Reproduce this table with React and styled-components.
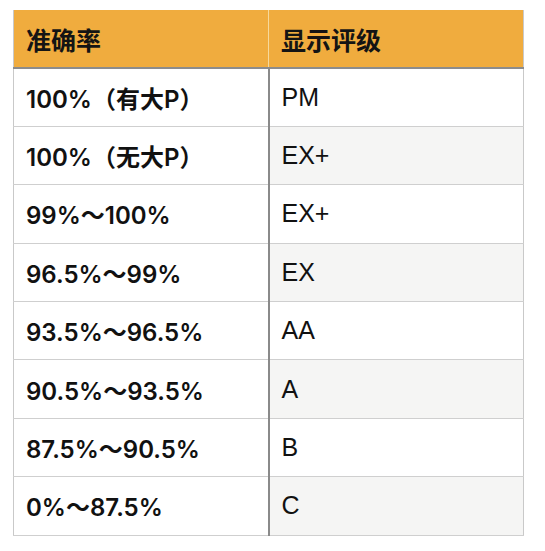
import React from "react";
import styled, { createGlobalStyle } from "styled-components";

const rows = [
  ["100%（有大P）", "PM"],
  ["100%（无大P）", "EX+"],
  ["99%～100%", "EX+"],
  ["96.5%～99%", "EX"],
  ["93.5%～96.5%", "AA"],
  ["90.5%～93.5%", "A"],
  ["87.5%～90.5%", "B"],
  ["0%～87.5%", "C"],
];

export default function App() {
  return (
    <>
      <GlobalStyle />
      <Table>
        <colgroup>
          <col style={{ width: 255 }} />
          <col style={{ width: 255 }} />
        </colgroup>
        <thead>
          <tr>
            <HeadCell $first>准确率</HeadCell>
            <HeadCell>显示评级</HeadCell>
          </tr>
        </thead>
        <tbody>
          {rows.map(([range, grade], i) => (
            <Row key={i}>
              <RangeCell>{range}</RangeCell>
              <GradeCell $shaded={i % 2 === 1}>{grade}</GradeCell>
            </Row>
          ))}
        </tbody>
      </Table>
    </>
  );
}

const GlobalStyle = createGlobalStyle`
  body {
    margin: 0;
    background: #ffffff;
    font-family: "Liberation Sans", "Noto Sans CJK SC", sans-serif;
    color: #111111;
  }
`;

const Table = styled.table`
  margin: 10px 0 0 13px;
  width: 510px;
  table-layout: fixed;
  border-collapse: collapse;
  border-left: 1px solid #c9c9c9;
  border-right: 1px solid #c9c9c9;
  border-bottom: 1px solid #c9c9c9;
`;

const HeadCell = styled.th`
  height: 58px;
  box-sizing: border-box;
  padding: 0 12px;
  background: #f0ac3e;
  text-align: left;
  font-family: "Noto Sans CJK SC", sans-serif;
  font-size: 25px;
  font-weight: 700;
  color: #141414;
  border-bottom: 2px solid #8c8c8c;
  border-right: ${(p) => (p.$first ? "1px solid #f7d99b" : "none")};
`;

const Row = styled.tr`
  height: 58.4px;
`;

const RangeCell = styled.td`
  padding: 0 12px;
  font-family: Inter, "Noto Sans CJK SC", sans-serif;
  font-size: 24px;
  font-weight: 600;
  background: #ffffff;
  border-bottom: 1px solid #cfcfcf;
  border-right: 2px solid #8a8a8a;
  white-space: nowrap;
`;

const GradeCell = styled.td`
  padding: 0 12px;
  font-size: 25px;
  font-weight: 400;
  background: ${(p) => (p.$shaded ? "#f5f5f4" : "#ffffff")};
  border-bottom: 1px solid #cfcfcf;
`;
